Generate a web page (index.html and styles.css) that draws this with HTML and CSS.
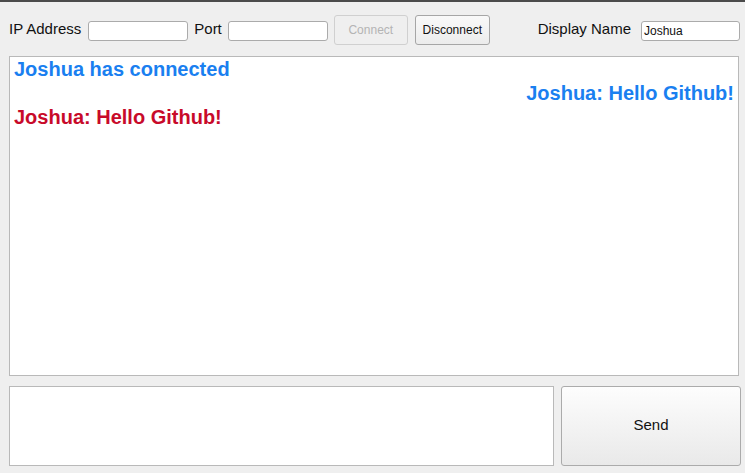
FILE: index.html
```html
<!DOCTYPE html>
<html>
<head>
<meta charset="utf-8">
<link rel="stylesheet" href="styles.css">
</head>
<body>
<div class="titlebar"></div>
<div class="app">
  <div class="toolbar">
    <span class="label">IP Address</span>
    <div class="field ip"></div>
    <span class="label port-label">Port</span>
    <div class="field port"></div>
    <div class="btn disabled connect">Connect</div>
    <div class="btn disconnect">Disconnect</div>
    <div class="spacer"></div>
    <span class="label">Display Name</span>
    <div class="field name">Joshua</div>
  </div>
  <div class="chat">
    <div class="msg sys">Joshua has connected</div>
    <div class="msg self">Joshua: Hello Github!</div>
    <div class="msg other">Joshua: Hello Github!</div>
  </div>
  <div class="bottom">
    <div class="compose"></div>
    <div class="send">Send</div>
  </div>
</div>
</body>
</html>
```

FILE: styles.css
```css
* { box-sizing: border-box; }
html, body {
  margin: 0;
  padding: 0;
  background: #efefef;
  font-family: "Liberation Sans", Arial, sans-serif;
  color: #111;
  width: 745px;
  height: 473px;
  overflow: hidden;
}
.titlebar {
  height: 2px;
  background: #4b4b4b;
}
.app {
  padding: 0 0 0 9px;
}
.toolbar {
  display: flex;
  align-items: center;
  height: 30px;
  margin-top: 13px;
}
.label {
  font-size: 15px;
  line-height: 18px;
  margin-top: -3px;
}
.field {
  height: 20px;
  width: 100px;
  background: #fff;
  border: 1px solid #ababab;
  border-radius: 3px;
  margin-top: 2px;
  font-size: 12px;
  line-height: 18px;
  padding-left: 2px;
}
.ip { margin-left: 7px; }
.port-label { margin-left: 6px; }
.port { margin-left: 6px; }
.btn {
  height: 30px;
  font-size: 12px;
  display: flex;
  align-items: center;
  justify-content: center;
  border-radius: 3px;
  background: linear-gradient(#f9f9f9, #ececec);
  border: 1px solid #a6a6a6;
}
.connect {
  width: 74px;
  margin-left: 6px;
  color: #b4b4b4;
  border-color: #d0d0d0;
  background: #efefef;
}
.disconnect {
  width: 75px;
  margin-left: 7px;
}
.spacer { flex: 1; }
.name {
  margin-left: 10px;
  width: 99px;
  margin-right: 5px;
}
.chat {
  margin-top: 11px;
  width: 730px;
  height: 320px;
  background: #fff;
  border: 1px solid #b9b9b9;
  padding: 0 4px;
}
.msg {
  font-size: 20px;
  line-height: 24px;
  font-weight: bold;
}
.sys, .self { color: #1a7ff0; }
.self { text-align: right; }
.other { color: #c80a2a; }
.bottom {
  display: flex;
  margin-top: 10px;
  height: 80px;
}
.compose {
  width: 545px;
  height: 80px;
  background: #fff;
  border: 1px solid #b9b9b9;
}
.send {
  margin-left: 7px;
  width: 180px;
  height: 80px;
  border: 1px solid #ababab;
  border-radius: 3px;
  background: linear-gradient(#fdfdfd, #e9e9e9);
  display: flex;
  align-items: center;
  justify-content: center;
  font-size: 15px;
  padding-bottom: 4px;
}
```
